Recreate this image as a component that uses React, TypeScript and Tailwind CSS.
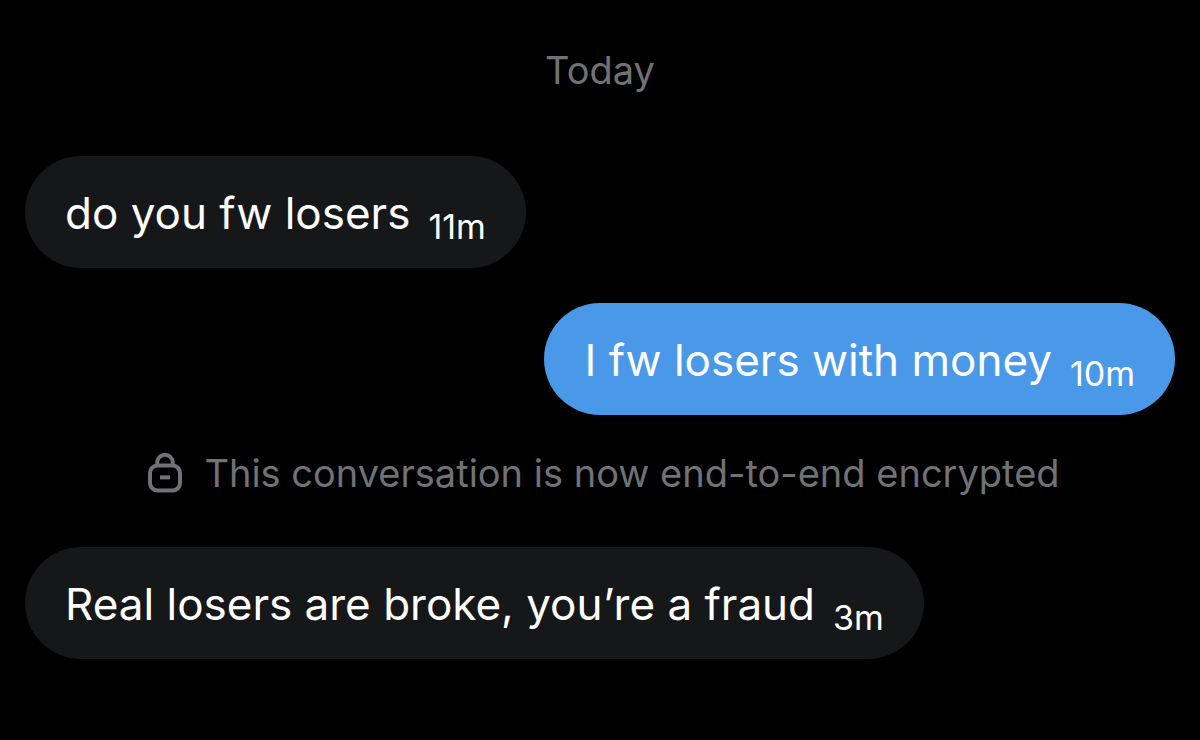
type Message = {
    text: string;
    time: string;
    mine?: boolean;
};

function Bubble({ text, time, mine = false }: Message) {
    return (
        <div
            className={
                mine
                    ? "self-end flex items-center gap-[18px] h-28 px-10 rounded-full bg-[#4a99e9]"
                    : "self-start flex items-center gap-[18px] h-28 px-10 rounded-full bg-[#161719]"
            }
        >
            <p className="pt-0.5 text-[44px] leading-[56px]">{text}</p>
            <time className="pt-[30px] text-[34px] leading-10">{time}</time>
        </div>
    );
}

function LockIcon() {
    return (
        <svg
            className="w-[34px] h-10 shrink-0"
            viewBox="0 0 34 40"
            fill="none"
            stroke="currentColor"
            strokeWidth="4"
            aria-hidden="true"
        >
            <path d="M9.2 12.6V9.6a7.8 7.8 0 0 1 15.6 0v3" />
            <rect x="2" y="12.6" width="30" height="24.8" rx="7.4" />
            <path d="M12 24.4h10" />
        </svg>
    );
}

export default function App() {
    return (
        <main className="min-h-screen flex flex-col px-[25px] pt-11 bg-black text-white font-['Inter',sans-serif]">
            <h2 className="text-center text-[38px] leading-[52px] text-[#717276]">Today</h2>
            <div className="flex flex-col gap-[35px] mt-[60px]">
                <Bubble text="do you fw losers" time="11m" />
                <Bubble text="I fw losers with money" time="10m" mine />
            </div>
            {/* Encryption notice */}
            <div className="flex items-center justify-center gap-[22px] mt-6 mb-10 pl-2 h-[68px] text-[#717276]">
                <LockIcon />
                <p className="text-[38px] leading-[52px]">
                    This conversation is now end-to-end encrypted
                </p>
            </div>
            <Bubble text="Real losers are broke, you’re a fraud" time="3m" />
        </main>
    );
}
